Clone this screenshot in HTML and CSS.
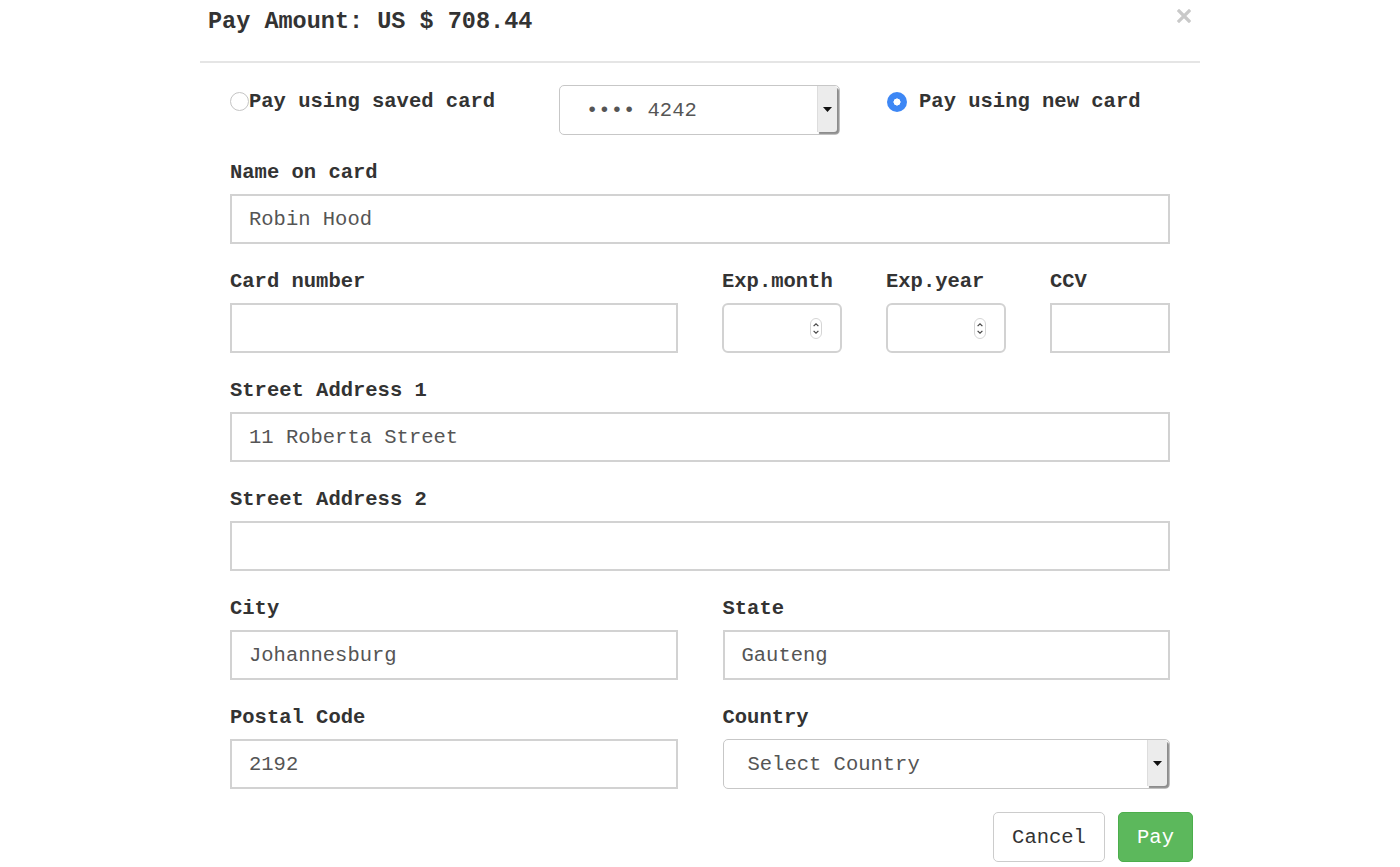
FILE: index.html
```html
<!DOCTYPE html>
<html>
<head>
<meta charset="utf-8">
<link rel="stylesheet" href="styles.css">
</head>
<body>
<div class="modal">
  <div class="modal-header">
    <h2 class="title">Pay Amount: US $ 708.44</h2>
    <span class="close" aria-label="close">
      <svg width="14" height="14" viewBox="0 0 14 14"><path d="M2 2 L12 12 M12 2 L2 12" stroke="#c9c9c9" stroke-width="3.2" stroke-linecap="square"/></svg>
    </span>
  </div>
  <div class="modal-body">
    <div class="choice-row">
      <label class="choice saved"><span class="radio"></span>Pay using saved card</label>
      <div class="select saved-select"><span class="select-text">•••• 4242</span><span class="select-arrow"><svg width="9" height="5" viewBox="0 0 9 5"><path d="M0 0 H9 L4.5 5 Z" fill="#111"/></svg></span></div>
      <label class="choice new"><span class="radio checked"></span>Pay using new card</label>
    </div>

    <div class="field">
      <div class="label">Name on card</div>
      <input class="input" type="text" value="Robin Hood">
    </div>

    <div class="grid card-grid">
      <div class="field">
        <div class="label">Card number</div>
        <input class="input" type="text" value="">
      </div>
      <div class="field">
        <div class="label">Exp.month</div>
        <div class="num-input"><svg class="spin" width="12" height="21" viewBox="0 0 12 21"><rect x="0.5" y="0.5" width="11" height="20" rx="5.5" fill="#fff" stroke="#d5d5d5"/><path d="M3.6 8.2 L6 5.8 L8.4 8.2 M3.6 12.8 L6 15.2 L8.4 12.8" fill="none" stroke="#444" stroke-width="1.2"/></svg></div>
      </div>
      <div class="field">
        <div class="label">Exp.year</div>
        <div class="num-input"><svg class="spin" width="12" height="21" viewBox="0 0 12 21"><rect x="0.5" y="0.5" width="11" height="20" rx="5.5" fill="#fff" stroke="#d5d5d5"/><path d="M3.6 8.2 L6 5.8 L8.4 8.2 M3.6 12.8 L6 15.2 L8.4 12.8" fill="none" stroke="#444" stroke-width="1.2"/></svg></div>
      </div>
      <div class="field">
        <div class="label">CCV</div>
        <input class="input" type="text" value="">
      </div>
    </div>

    <div class="field">
      <div class="label">Street Address 1</div>
      <input class="input" type="text" value="11 Roberta Street">
    </div>

    <div class="field">
      <div class="label">Street Address 2</div>
      <input class="input" type="text" value="">
    </div>

    <div class="grid half-grid">
      <div class="field">
        <div class="label">City</div>
        <input class="input" type="text" value="Johannesburg">
      </div>
      <div class="field">
        <div class="label">State</div>
        <input class="input" type="text" value="Gauteng">
      </div>
    </div>

    <div class="grid half-grid">
      <div class="field">
        <div class="label">Postal Code</div>
        <input class="input" type="text" value="2192">
      </div>
      <div class="field">
        <div class="label">Country</div>
        <div class="select country-select"><span class="select-text">Select Country</span><span class="select-arrow"><svg width="9" height="5" viewBox="0 0 9 5"><path d="M0 0 H9 L4.5 5 Z" fill="#111"/></svg></span></div>
      </div>
    </div>

    <div class="footer">
      <button class="btn btn-default">Cancel</button>
      <button class="btn btn-success">Pay</button>
    </div>
  </div>
</div>
</body>
</html>
```

FILE: styles.css
```css
* { box-sizing: border-box; }

html, body {
  margin: 0;
  padding: 0;
  background: #ffffff;
}

body {
  font-family: "Liberation Mono", "Courier New", monospace;
  color: #333333;
  font-size: 20.5px;
}

.modal {
  width: 1000px;
  margin: 0 auto;
}

.modal-header {
  height: 63px;
  border-bottom: 2px solid #e5e5e5;
  display: flex;
  align-items: flex-start;
  justify-content: space-between;
  padding: 9px 8px 0 8px;
}

.title {
  margin: 0;
  font-size: 23.5px;
  line-height: 26px;
  font-weight: bold;
  color: #333;
}

.close {
  margin-top: 0;
  margin-right: 1px;
  display: block;
  line-height: 0;
}

.modal-body {
  padding: 22px 30px 0 30px;
}

.choice-row {
  display: flex;
  align-items: center;
  height: 50px;
  margin-bottom: 24px;
}

.choice {
  display: flex;
  align-items: center;
  font-weight: bold;
  line-height: 24px;
  margin-top: -17px;
}

.choice.new .radio {
  margin-right: 12px;
}

.radio {
  width: 19px;
  height: 19px;
  border-radius: 50%;
  border: 1px solid #c4c4c4;
  background: #fff;
  display: inline-block;
}

.radio.checked {
  width: 20px;
  height: 20px;
  border: none;
  background: radial-gradient(circle, #ffffff 0 3.3px, #3d87f5 3.8px);
}

.select {
  height: 50px;
  border: 1px solid #c7c7c7;
  border-radius: 5px;
  background: #fff;
  display: flex;
  align-items: center;
  justify-content: space-between;
  color: #555;
  padding-right: 1px;
}

.saved-select {
  width: 281px;
  margin-left: 64px;
  margin-right: 47px;
}

.select-text {
  padding-left: 26px;
  font-size: 20.5px;
}

.select-arrow {
  align-self: stretch;
  width: 20px;
  margin: 0 1px 2px 0;
  background: #ececec;
  border-left: 1px solid #dddddd;
  box-shadow: 2px 2px 1px #8c8c8c;
  border-radius: 0 3px 3px 0;
  display: flex;
  align-items: center;
  justify-content: center;
}

.field {
  margin-bottom: 24px;
}

.label {
  font-weight: bold;
  line-height: 24px;
  padding-top: 2px;
  margin-bottom: 9px;
  color: #333;
}

.input {
  display: block;
  width: 100%;
  height: 50px;
  border: 2px solid #d2d2d2;
  border-radius: 0;
  padding: 0 17px;
  font-family: "Liberation Mono", "Courier New", monospace;
  font-size: 20.5px;
  color: #555;
  background: #fff;
  outline: none;
}

.num-input {
  height: 50px;
  border: 2px solid #d2d2d2;
  border-radius: 6px;
  background: #fff;
  display: flex;
  align-items: center;
  justify-content: flex-end;
  padding-right: 18px;
}

.grid {
  display: grid;
}

.card-grid {
  grid-template-columns: 1fr 120px 120px 120px;
  column-gap: 44px;
}

.half-grid {
  grid-template-columns: 1fr 1fr;
  column-gap: 45px;
}

.country-select {
  width: 100%;
}

.country-select .select-text {
  padding-left: 24px;
}

.footer {
  display: flex;
  justify-content: flex-end;
  gap: 13px;
  margin-right: -23px;
  margin-top: -1px;
}

.btn {
  height: 50px;
  border-radius: 5px;
  font-family: "Liberation Mono", "Courier New", monospace;
  font-size: 20.5px;
  cursor: pointer;
}

.btn-default {
  width: 112px;
  background: #fff;
  border: 1px solid #cccccc;
  color: #333;
}

.btn-success {
  width: 75px;
  background: #5cb85c;
  border: 1px solid #4cae4c;
  color: #fff;
}
```
